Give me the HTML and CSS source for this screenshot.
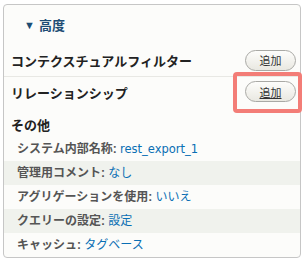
FILE: index.html
```html
<!DOCTYPE html>
<html lang="ja">
<head>
    <meta charset="UTF-8">
    <title>高度</title>
    <link rel="stylesheet" href="styles.css">
</head>
<body>

<div class="panel">
    <div class="panel-title"><span class="arrow">▼</span> 高度</div>

    <div class="rel-row sep">
        <span class="rel-label">コンテクスチュアルフィルター</span>
        <button class="btn">追加</button>
    </div>
    <div class="rel-row second">
        <span class="rel-label">リレーションシップ</span>
        <button class="btn active">追加</button>
        <span class="highlight"></span>
    </div>

    <div class="group-title">その他</div>
    <ul class="settings">
        <li>システム内部名称: <a href="#" class="latin">rest_export_1</a></li>
        <li class="odd">管理用コメント: <a href="#">なし</a></li>
        <li>アグリゲーションを使用: <a href="#">いいえ</a></li>
        <li class="odd">クエリーの設定: <a href="#">設定</a></li>
        <li>キャッシュ: <a href="#">タグベース</a></li>
    </ul>
</div>

</body>
</html>
```

FILE: styles.css
```css
body {
    margin: 0;
    background: #fff;
    font-family: "Liberation Sans", "Noto Sans CJK JP", sans-serif;
}
.panel {
    margin: 4px 0 0 3px;
    width: 296px;
    border: 1px solid #c6c6c6;
    border-radius: 4px;
    background: #fcfcfa;
}
.panel-title {
    height: 39px;
    padding-left: 20px;
    display: flex;
    align-items: center;
    font-size: 13px;
    font-weight: bold;
    color: #1d4c74;
}
.arrow {
    font-size: 11px;
    margin-right: 4px;
}
.rel-row {
    position: relative;
    display: flex;
    align-items: center;
    justify-content: space-between;
    padding: 0 4px 0 7px;
}
.rel-row.sep {
    height: 32px;
    border-bottom: 1px solid #e8e8e4;
}
.rel-row.second {
    height: 35px;
    align-items: flex-start;
    padding-top: 4px;
    box-sizing: border-box;
}
.rel-label {
    font-size: 13px;
    font-weight: bold;
    color: #222;
}
.second .rel-label {
    margin-top: 2px;
}
.btn {
    width: 51px;
    height: 21px;
    padding: 0;
    border: 1px solid #a9a9a5;
    border-radius: 11px;
    background: linear-gradient(#fdfdfb, #e9e8e1);
    font-family: "Noto Sans CJK JP", sans-serif;
    font-size: 11px;
    color: #333;
}
.btn.active {
    text-decoration: underline;
}
.highlight {
    position: absolute;
    left: 229px;
    top: -5px;
    width: 61px;
    height: 33px;
    border: 4px solid #f37d77;
    border-radius: 4px;
}
.group-title {
    height: 25px;
    padding-left: 7px;
    display: flex;
    align-items: center;
    font-size: 13px;
    font-weight: bold;
    color: #222;
}
.settings {
    list-style: none;
    margin: 0;
    padding: 0;
}
.settings li {
    height: 24px;
    line-height: 25px;
    padding-left: 13px;
    font-size: 12px;
    font-weight: bold;
    color: #555;
}
.settings li.odd {
    background: #f0f2ed;
}
.settings a {
    font-weight: normal;
    color: #0a6fb4;
    text-decoration: none;
}
.settings a.latin {
    font-family: "DejaVu Sans", sans-serif;
    font-size: 11.5px;
}
```
